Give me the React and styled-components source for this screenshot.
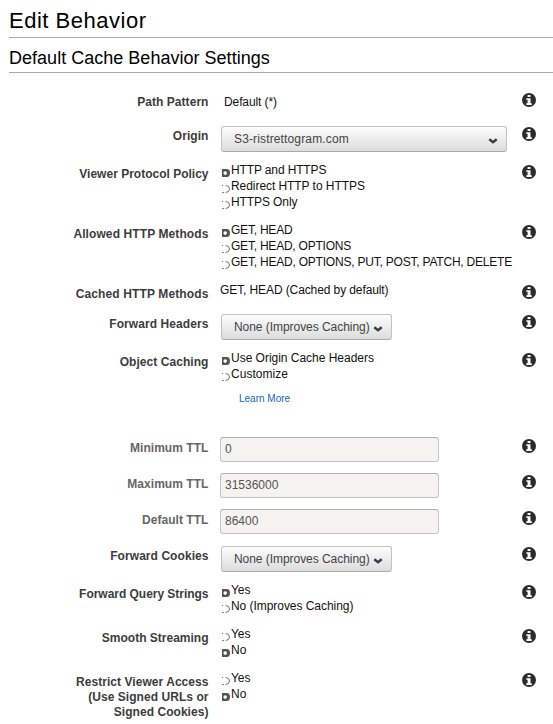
import React from "react";
import styled, { createGlobalStyle } from "styled-components";

const GlobalStyle = createGlobalStyle`
  * { box-sizing: border-box; }
  body {
    margin: 0;
    background: #fff;
    color: #111;
    font-family: "Liberation Sans", Helvetica, Arial, sans-serif;
    font-size: 12px;
  }
`;

const Page = styled.main`
  width: 553px;
  height: 724px;
  overflow: hidden;
  padding-left: 9px;
`;

const Title = styled.h1`
  margin: 0;
  height: 38px;
  padding-top: 8px;
  border-bottom: 1px solid #aaa;
  font-size: 22px;
  font-weight: 400;
  line-height: 26px;
  letter-spacing: 0.52px;
  color: #000;
`;

const Subtitle = styled.h2`
  margin: 0 0 17px;
  height: 35px;
  padding-top: 9px;
  border-bottom: 1px solid #aaa;
  font-size: 18px;
  font-weight: 400;
  line-height: 22px;
  letter-spacing: 0.02px;
  color: #000;
`;

const Row = styled.section`
  display: grid;
  grid-template-columns: 200px 293px 14px;
  column-gap: 10px;
  height: ${(p) => p.$height}px;
`;

const Label = styled.div`
  padding: 5px 0.5px 0 0;
  text-align: right;
  font-weight: 700;
  line-height: 15px;
  letter-spacing: ${(p) => p.$tracking}px;
  white-space: pre;
  color: ${(p) => (p.$muted ? "#666" : "#3c3c3c")};
`;

const Field = styled.div`
  padding-left: 1px;
  white-space: nowrap;
`;

const PlainText = styled.div`
  padding: ${(p) => (p.$indent ? "4px 0 0 4px" : "0")};
  line-height: 16px;
  letter-spacing: -0.1px;
`;

const Select = styled.button`
  display: flex;
  align-items: center;
  justify-content: space-between;
  width: ${(p) => p.$width}px;
  height: 26px;
  margin: 2px 0 0 1px;
  padding: 0 8px 0 12px;
  border: 1px solid #c2c2c2;
  border-bottom-color: #aaa;
  border-radius: 3px;
  background: linear-gradient(#fdfdfd, #dcdcdc);
  font: inherit;
  color: #444;
`;

const Option = styled.div`
  display: flex;
  gap: 1px;
  height: 16px;
  padding-left: 2px;
  line-height: 16px;
`;

const RadioMark = styled.svg`
  flex: none;
  margin-top: 7px;
`;

const HelpLink = styled.a`
  display: block;
  margin: 9px 0 0 19px;
  font-size: 10px;
  line-height: 16px;
  letter-spacing: 0;
  color: #1166bb;
`;

const Input = styled.input`
  display: block;
  width: 219px;
  height: 25px;
  margin-top: 1px;
  padding: 0 4px 2px;
  border: 1px solid #c4c4c4;
  border-top-color: #b0b0b0;
  border-radius: 3px;
  background: #f4f3f0;
  font: inherit;
  color: #555;
`;

const InfoMark = styled.svg`
  margin-top: 3px;
`;

const Text = styled.span`
  white-space: nowrap;
  letter-spacing: ${(p) => p.$tracking || 0}px;
`;

const ChevronMark = styled.svg`
  flex: none;
  margin-top: 3px;
`;

function Info() {
  return (
    <InfoMark width="14" height="14" viewBox="0 0 14 14">
      <circle cx="7" cy="7" r="7" fill="#2b2b2b" />
      <path d="M5.6 1.9h2.9v2.2H5.6zM4.3 5.2h4.2v5h1.3v1.7H4.3v-1.7h1.3V6.8H4.3z" fill="#fff" />
    </InfoMark>
  );
}

function Radio({ checked }) {
  return (
    <RadioMark width="8" height="8" viewBox="0 0 8 8">
      {checked ? (
        <>
          <path d="M0 0h4.8Q8 0 8 4T4.8 8H0z" fill="#555" />
          <circle cx="3.2" cy="4.1" r="1.8" fill="#fff" />
        </>
      ) : (
        <path d="M0 .5h1M3.6 .5Q7.5 .7 7.5 4T3.6 7.5M0 7.5h1.8" fill="none" stroke="#737373" />
      )}
    </RadioMark>
  );
}

function Chevron() {
  return (
    <ChevronMark width="10" height="6" viewBox="0 0 10 6">
      <path d="M1.3 1.2 5 4.2 8.7 1.2" fill="none" stroke="#3b3b3b" strokeWidth="2.4" />
    </ChevronMark>
  );
}

function Dropdown({ width, tracking, children }) {
  return (
    <Select $width={width}>
      <Text $tracking={tracking}>{children}</Text>
      <Chevron />
    </Select>
  );
}

function Options({ items, selected }) {
  return items.map(([text, tracking], i) => (
    <Option key={text}>
      <Radio checked={i === selected} />
      <Text $tracking={tracking}>{text}</Text>
    </Option>
  ));
}

function FormRow({ label, height, muted, tracking = 0.05, children }) {
  return (
    <Row $height={height}>
      <Label $muted={muted} $tracking={tracking}>{label}</Label>
      <Field>{children}</Field>
      <Info />
    </Row>
  );
}

export default function App() {
  return (
    <Page>
      <GlobalStyle />
      <Title>Edit Behavior</Title>
      <Subtitle>Default Cache Behavior Settings</Subtitle>
      <FormRow label="Path Pattern" height={34}>
        <PlainText $indent>Default (*)</PlainText>
      </FormRow>
      <FormRow label="Origin" height={38}>
        <Dropdown width={286} tracking={0.14}>S3-ristrettogram.com</Dropdown>
      </FormRow>
      <FormRow label="Viewer Protocol Policy" height={60} tracking={0}>
        <Options
          items={[["HTTP and HTTPS", -0.13], ["Redirect HTTP to HTTPS", -0.06], ["HTTPS Only", -0.1]]}
          selected={0}
        />
      </FormRow>
      <FormRow label="Allowed HTTP Methods" height={60} tracking={0.1}>
        <Options
          items={[
            ["GET, HEAD", -0.22],
            ["GET, HEAD, OPTIONS", -0.22],
            ["GET, HEAD, OPTIONS, PUT, POST, PATCH, DELETE", -0.21],
          ]}
          selected={0}
        />
      </FormRow>
      <FormRow label="Cached HTTP Methods" height={30} tracking={0.12}>
        <PlainText>GET, HEAD (Cached by default)</PlainText>
      </FormRow>
      <FormRow label="Forward Headers" height={38} tracking={0.08}>
        <Dropdown width={171} tracking={-0.05}>None (Improves Caching)</Dropdown>
      </FormRow>
      <FormRow label="Object Caching" height={86} tracking={0.06}>
        <Options items={[["Use Origin Cache Headers", -0.02], ["Customize", 0.04]]} selected={0} />
        <HelpLink>Learn More</HelpLink>
      </FormRow>
      <FormRow label="Minimum TTL" height={36} muted>
        <Input defaultValue="0" />
      </FormRow>
      <FormRow label="Maximum TTL" height={36} muted>
        <Input defaultValue="31536000" />
      </FormRow>
      <FormRow label="Default TTL" height={36} muted>
        <Input defaultValue="86400" />
      </FormRow>
      <FormRow label="Forward Cookies" height={38} tracking={0.06}>
        <Dropdown width={171} tracking={-0.05}>None (Improves Caching)</Dropdown>
      </FormRow>
      <FormRow label="Forward Query Strings" height={44} tracking={-0.03}>
        <Options items={[["Yes", -0.1], ["No (Improves Caching)", -0.05]]} selected={0} />
      </FormRow>
      <FormRow label="Smooth Streaming" height={44} tracking={0}>
        <Options items={[["Yes", -0.1], ["No", 0]]} selected={1} />
      </FormRow>
      <FormRow label={"Restrict Viewer Access\n(Use Signed URLs or\nSigned Cookies)"} height={54}>
        <Options items={[["Yes", -0.1], ["No", 0]]} selected={1} />
      </FormRow>
    </Page>
  );
}
